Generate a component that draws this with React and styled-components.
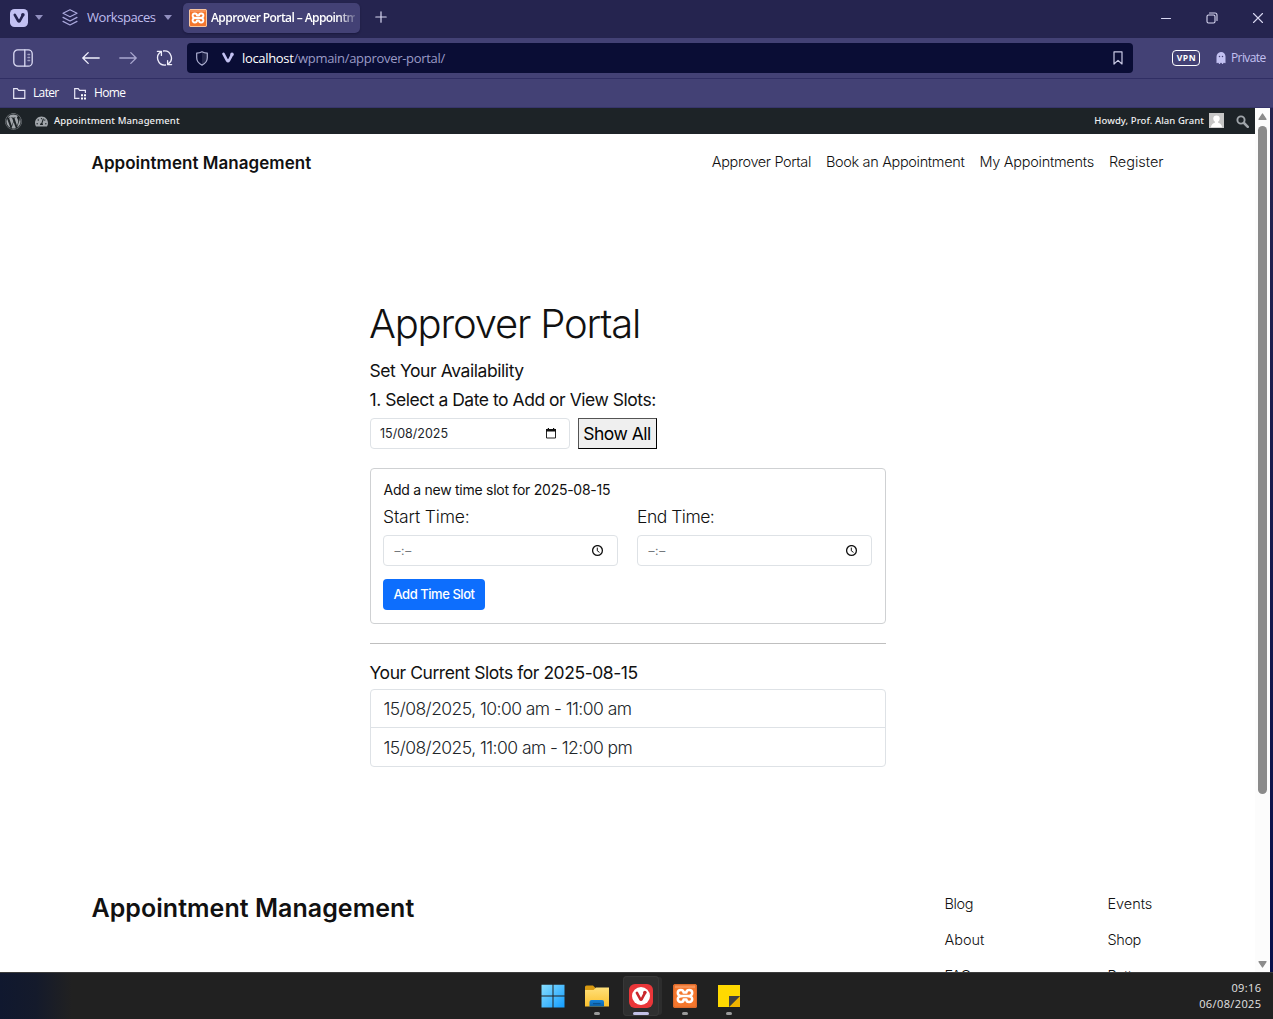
import React from "react";
import styled, { createGlobalStyle, css } from "styled-components";
import { FaWordpress, FaGhost, FaTachometerAlt } from "react-icons/fa";

const GlobalStyle = createGlobalStyle`
  *, *::before, *::after { box-sizing: border-box; }
  body { margin: 0; overflow: hidden; }
  svg { display: block; flex: none; }
`;

const ui = css`font-family: "Open Sans", "Noto Sans", sans-serif;`;
const site = css`font-family: Inter, "Noto Sans", sans-serif;`;

const Screen = styled.div`
  display: flex;
  flex-direction: column;
  width: 1273px;
  height: 1019px;
  overflow: hidden;
  background: #fff;
`;

/* ---------- browser chrome ---------- */
const Label = styled.span`
  ${ui}
  white-space: pre;
  line-height: 18px;
  font-size: ${(p) => p.$size || 12}px;
  font-weight: ${(p) => p.$weight || 400};
  letter-spacing: ${(p) => p.$track || 0}px;
  color: ${(p) => p.$color || "#fff"};
`;

const TabBar = styled.header`
  display: flex;
  align-items: center;
  flex: none;
  height: 38px;
  padding: 0 9px 3px 10px;
  background: #25244f;
`;

const VivaldiMenu = styled.div`
  display: flex;
  align-items: center;
  gap: 7px;
  width: 52px;
`;

const Workspaces = styled.div`
  display: flex;
  align-items: center;
  width: 121px;
`;

const WorkspacesLabel = styled(Label)`
  width: 70px;
  margin: -2px 7px 0 9px;
`;

const Tab = styled.div`
  display: flex;
  align-items: center;
  gap: 4px;
  width: 177px;
  height: 30px;
  padding: 0 5px 0 6px;
  border-radius: 5px;
  background: #434175;
  box-shadow: 0 1px 2px rgba(10, 10, 40, 0.4);
`;

const TabTitle = styled(Label)`
  flex: 1;
  overflow: hidden;
  mask-image: linear-gradient(90deg, #000 88%, transparent 103%);
`;

const NewTab = styled.div`
  margin: -1px 0 0 15px;
`;

const WindowControls = styled.div`
  display: flex;
  align-items: center;
  gap: 34px;
  margin-left: auto;
  margin-top: 1px;
`;

const AddressBar = styled.nav`
  display: flex;
  align-items: center;
  flex: none;
  height: 41px;
  padding: 0 7px 0 13px;
  background: #434175;
  border-bottom: 1px solid #302e64;
`;

const NavButtons = styled.div`
  display: flex;
  align-items: center;
  gap: 19px;
  margin-left: 49px;
  margin-right: 14px;
`;

const UrlField = styled.div`
  display: flex;
  align-items: center;
  flex: none;
  width: 946px;
  height: 30px;
  padding: 0 10px 0 9px;
  border-radius: 4px;
  background: #0a0d35;
`;

const Url = styled.div`
  display: flex;
  flex: 1;
  margin-left: 8px;
`;

const SiteMark = styled.div`
  margin-left: 14px;
`;

const VpnBadge = styled.span`
  display: flex;
  flex: none;
  align-items: center;
  justify-content: center;
  width: 28px;
  height: 16px;
  margin-left: 39px;
  border: 1.5px solid #fff;
  border-radius: 4px;
  color: #fff;
  font: 700 8.5px/1 "Open Sans", sans-serif;
  letter-spacing: 0.6px;
  padding-left: 1px;
`;

const PrivateBadge = styled.div`
  display: flex;
  align-items: center;
  gap: 4px;
  margin-left: 15px;
  color: #c3c1f2;
`;

const BookmarkBar = styled.nav`
  display: flex;
  align-items: center;
  flex: none;
  height: 29px;
  padding-left: 12px;
  background: #434175;
  border-bottom: 1px solid #37356b;
`;

const Bookmark = styled.a`
  display: flex;
  align-items: center;
  gap: 7px;
  width: 61px;
`;

/* ---------- page area ---------- */
const Viewport = styled.div`
  display: flex;
  flex: 1;
  min-height: 0;
  background: linear-gradient(#25244f, #08104a);
`;

const Page = styled.main`
  width: 1255px;
  height: 100%;
  overflow: hidden;
  background: #fff;
`;

const Scrollbar = styled.aside`
  display: flex;
  flex-direction: column;
  align-items: center;
  width: 15px;
  padding: 5px 0 4px;
  background: #fcfcfc;
`;

const ScrollTrack = styled.div`
  flex: 1;
  padding-top: 6px;
`;

const ScrollThumb = styled.div`
  width: 9px;
  height: 668px;
  border-radius: 5px;
  background: #8b8b8b;
`;

const AdminBar = styled.div`
  display: flex;
  align-items: center;
  height: 26px;
  padding: 0 6px 0 5px;
  background: #1d2327;
  color: #a0a5aa;
`;

const AdminText = styled.span`
  font: 500 9.5px/20px "Noto Sans", sans-serif;
  letter-spacing: ${(p) => p.$track}px;
  color: #f0f0f1;
  white-space: nowrap;
`;

const AdminSite = styled.div`
  display: flex;
  align-items: center;
  gap: 6px;
  margin-left: 13px;
`;

const AdminUser = styled.div`
  display: flex;
  align-items: center;
  gap: 5px;
  margin: 0 12px 0 auto;
  padding-bottom: 1px;
`;

const SiteHeader = styled.header`
  display: flex;
  align-items: center;
  justify-content: space-between;
  height: 57px;
  padding: 0 91.5px;
`;

const SiteTitle = styled.div`
  ${site}
  font-weight: 600;
  font-size: ${(p) => (p.$large ? 25 : 17)}px;
  line-height: 32px;
  letter-spacing: 0.04px;
  color: #111;
`;

const SiteNav = styled.nav`
  display: flex;
  gap: 15px;
  margin-top: -2px;
`;

const SiteLink = styled.a`
  ${site}
  font-weight: 300;
  font-size: 14.5px;
  line-height: 20px;
  letter-spacing: ${(p) => p.$track || 0}px;
  color: #111;
  white-space: nowrap;
`;

const Content = styled.section`
  width: 516px;
  margin: 103px 0 0 370px;
`;

const PageTitle = styled.h1`
  ${site}
  margin: 0 0 2px -1px;
  font-weight: 300;
  font-size: 40px;
  line-height: 60px;
  letter-spacing: -1.2px;
  white-space: nowrap;
  color: #111;
`;

const Heading = styled.h2`
  ${site}
  margin: 0 0 0 -0.5px;
  font-weight: 400;
  font-size: 17.5px;
  line-height: 29px;
  letter-spacing: ${(p) => p.$track}px;
  white-space: nowrap;
  color: #111;
`;

const DateRow = styled.div`
  display: flex;
  gap: 8px;
  margin-top: 4px;
`;

const Field = styled.div`
  ${site}
  display: flex;
  align-items: center;
  justify-content: space-between;
  width: ${(p) => p.$width}px;
  height: 31px;
  padding: 0 ${(p) => p.$right}px 0 9px;
  border: 1px solid #dee2e6;
  border-radius: 4px;
  font-size: 12.5px;
  color: #212529;
`;

const ShowAll = styled.button`
  ${site}
  width: 79px;
  height: 31px;
  padding: 0 1px 0 0;
  border: 1px outset #000;
  background: #efefef;
  font-size: 17.5px;
  line-height: 27px;
  letter-spacing: -0.5px;
  color: #000;
  white-space: nowrap;
`;

const Card = styled.div`
  height: 156px;
  margin-top: 19px;
  padding: 10px 13px 0;
  border: 1px solid #cfd1d3;
  border-radius: 4px;
`;

const CardTitle = styled.h3`
  ${site}
  margin: 0 0 0 -0.5px;
  font-weight: 400;
  font-size: 14px;
  line-height: 22px;
  letter-spacing: -0.26px;
  color: #111;
`;

const TimeGrid = styled.div`
  display: grid;
  grid-template-columns: 235px 235px;
  gap: 19px;
  margin: 0 0 13px -1px;
`;

const FieldLabel = styled.label`
  ${site}
  display: block;
  font-weight: 300;
  font-size: 17.5px;
  line-height: 31px;
  height: 34px;
  letter-spacing: ${(p) => p.$track}px;
  color: #111;
`;

const EmptyTime = styled.span`
  padding-left: 1.5px;
  font-size: 12px;
  line-height: 14px;
  letter-spacing: 0.6px;
  color: #74787c;
`;

const AddButton = styled.button`
  ${site}
  display: block;
  width: 102px;
  height: 31px;
  margin-left: -1px;
  padding: 0 0 1px;
  border: 0;
  border-radius: 4px;
  background: #0d6efd;
  color: #fff;
  font-weight: 500;
  font-size: 13px;
  letter-spacing: -0.45px;
  white-space: nowrap;
`;

const Divider = styled.div`
  height: 1px;
  margin: 19px 0 14px;
  background: #bfbfbf;
`;

const SlotList = styled.ul`
  margin: 2px 0 0;
  padding: 0;
  list-style: none;
  border: 1px solid #dee2e6;
  border-radius: 4px;
`;

const Slot = styled.li`
  ${site}
  height: 37px;
  padding-left: 12.5px;
  font-weight: 300;
  font-size: 17.5px;
  line-height: 38px;
  letter-spacing: -0.55px;
  color: #212529;
  & + & {
    height: 39px;
    line-height: 39px;
    border-top: 1px solid #dee2e6;
  }
`;

const SiteFooter = styled.footer`
  display: grid;
  grid-template-columns: 853px 163px 100px;
  padding: 125px 0 0 91.5px;
`;

const FooterColumn = styled.div`
  display: flex;
  flex-direction: column;
  gap: 16px;
  padding-top: 2px;
`;

/* ---------- taskbar ---------- */
const Taskbar = styled.footer`
  display: flex;
  justify-content: space-between;
  flex: none;
  height: 47px;
  padding: 0 12px 0 530.5px;
  border-top: 1px solid #3c3c3c;
  background: linear-gradient(90deg, #10182f 0, #141a2b 36px, #212121 72px, #212121 100%);
`;

const TaskItems = styled.div`
  display: flex;
  padding-top: 3px;
`;

const TaskItem = styled.div`
  display: flex;
  flex-direction: column;
  align-items: center;
  justify-content: space-between;
  width: 36px;
  height: 40px;
  margin: 0 4px;
  padding: 8px 0 1px;
  border-radius: 4px;
  background: ${(p) => (p.$active ? "#2f2f2f" : "transparent")};
  box-shadow: ${(p) => (p.$active ? "inset 0 0 0 1px #383838, 4px 0 0 -1px #2d2d2d" : "none")};
`;

const Indicator = styled.div`
  width: ${(p) => (p.$active ? 16 : 6)}px;
  height: 3px;
  border-radius: 2px;
  background: ${(p) => (p.$active ? "#c3c1e6" : "#9a9a9a")};
`;

const Clock = styled.div`
  display: flex;
  flex-direction: column;
  align-items: flex-end;
  padding-top: 7px;
`;

const ClockLine = styled.span`
  ${ui}
  font-size: 11px;
  line-height: 16px;
  letter-spacing: 0.38px;
  margin-right: -0.4px;
  color: #e4e4e4;
`;

/* ---------- drawings ---------- */
const Stroke = ({ w, h, color = "#d9d8f2", width = 1.3, children }) => (
  <svg width={w} height={h} viewBox={`0 0 ${w} ${h}`} fill="none" stroke={color} strokeWidth={width} strokeLinecap="round" strokeLinejoin="round">
    {children}
  </svg>
);

const Caret = () => (
  <svg width="8" height="5" viewBox="0 0 8 5"><path d="M0 0h8L4 5z" fill="#918fbf" /></svg>
);

const VivaldiMark = ({ size = 12, color }) => (
  <svg width={size} height={size} viewBox="0 0 12 12" fill="none">
    <path d="M1.5 1.8 5.1 8.6Q6 10 6.9 8.6L9.4 3.8" stroke={color} strokeWidth="2.6" strokeLinecap="round" />
    <circle cx="10" cy="2.4" r="1.8" fill={color} />
  </svg>
);

const VivaldiBadge = () => (
  <svg width="18" height="18" viewBox="0 0 18 18" fill="none">
    <rect width="18" height="18" rx="4.5" fill="#c3c1f2" />
    <path d="M4.8 5.8 8.3 12Q9 13.1 9.7 12L12.6 6.6" stroke="#25244f" strokeWidth="2.6" strokeLinecap="round" strokeLinejoin="round" />
    <circle cx="12.9" cy="5.8" r="1.8" fill="#25244f" />
  </svg>
);

const Layers = () => (
  <Stroke w={16} h={17} color="#aaa8dc" width={1.2}>
    <path d="M8 .8 15 4.3 8 7.8 1 4.3z" />
    <path d="M1 8.4 8 12 15 8.4M1 12.4 8 16 15 12.4" />
  </Stroke>
);

const Xampp = ({ size }) => (
  <svg width={size} height={size} viewBox="0 0 24 24" fill="none">
    <rect width="24" height="24" rx="2.5" fill="#f5772d" />
    <rect x=".6" y=".6" width="22.8" height="22.8" rx="2" stroke={size < 20 ? "#f5d5b8" : "#dd6a2b"} strokeWidth="1.2" />
    <path d="M2 1.5h20v2.5H2z" fill="#fff" opacity=".2" />
    <path
      d="M10 12C6.5 12 4.8 11 4.8 8.9S6 6 7.8 6 10.6 7.3 10.6 8.6H13.4C13.4 7.3 14.4 6 16.2 6S19.2 6.8 19.2 8.9 17.5 12 14 12C17.5 12 19.2 13 19.2 15.1S18 18 16.2 18 13.4 16.7 13.4 15.4H10.6C10.6 16.7 9.6 18 7.8 18S4.8 17.2 4.8 15.1 6.5 12 10 12ZM9 12H15"
      stroke="#fff" strokeWidth="2.5" strokeLinejoin="round"
    />
  </svg>
);

const PanelIcon = () => (
  <Stroke w={20} h={18} color="#dcdbf4" width={1.3}>
    <rect x=".8" y=".8" width="18.4" height="16.4" rx="4" />
    <path d="M11.8 1v16" />
    <path d="M15 5.5h1.6M15 8.5h1.6M15 11.5h1.6" strokeWidth="1.4" opacity=".6" />
  </Stroke>
);

const Arrow = ({ dim, flip }) => (
  <Stroke w={18} h={14} color={dim ? "#a9a7cf" : "#f0effc"}>
    <path d={flip ? "M.8 7H17M11.8 1.6 17.2 7l-5.4 5.4" : "M17.2 7H1M6.2 1.6.8 7l5.4 5.4"} />
  </Stroke>
);

const Reload = () => (
  <Stroke w={17} h={16} color="#f0effc" width={1.3}>
    <path d="M9.5 15A7.1 7.1 0 0 1 5 1.9" />
    <path d="M7.5 1A7.1 7.1 0 0 1 12 14.1" />
    <path d="M1.4 1.4H5.4V5.4M15.6 14.6H11.6V10.6" />
  </Stroke>
);

const Shield = () => (
  <Stroke w={12} h={15} color="#aeb0d2" width={1.2}>
    <path d="M6 1.2v12.6C9 12.6 11.3 9.6 11.3 6.5V2.3Z" fill="#25284d" stroke="none" />
    <path d="M6 .8Q8.4 2 11.3 2.1V6.8C11.3 10 8.7 12.8 6 14.1 3.3 12.8.7 10 .7 6.8V2.1Q3.6 2 6 .8Z" />
  </Stroke>
);

const Folder = ({ dots }) => (
  <svg width="14" height="13" viewBox="0 0 14 13" fill="none">
    <path
      d={dots ? "M6.5 11.3H1.7V1.7H5.2L6.6 3.3H12.4V6" : "M1.7 1.7H5.2L6.6 3.3H12.8V11.3H1.7Z"}
      stroke="#e9e8f8" strokeWidth="1.2"
    />
    {dots && <path d="M8 7.3h2v2H8zM11 7.3h2v2h-2zM8 10.5h2v2H8zM11 10.5h2v2h-2z" fill="#fff" />}
  </svg>
);

const Avatar = () => (
  <svg width="15" height="15" viewBox="0 0 15 15">
    <path d="M0 0h15v15H0z" fill="#c6c6c6" />
    <circle cx="7.5" cy="5.6" r="3.2" fill="#fff" />
    <path d="M2 14.3C2.3 11 4.5 9.8 7.5 9.8S12.7 11 13 14.3Z" fill="#fff" />
    <path d="M5.8 7.5h3.4V11H5.8z" fill="#fff" />
  </svg>
);

const SearchIcon = () => (
  <svg width="13" height="13" viewBox="0 0 13 13" fill="none" stroke="#a0a5aa">
    <circle cx="5" cy="5" r="3.6" strokeWidth="1.9" />
    <path d="M8 8 11.8 11.8" strokeWidth="2.5" strokeLinecap="round" />
  </svg>
);

const CalendarIcon = () => (
  <svg width="10" height="11" viewBox="0 0 10 11">
    <path d="M.5 2.2h9V10h-9z" fill="none" stroke="#222" />
    <path d="M0 1h10v2.6H0zM1.8 0h1.2v2H1.8zM7 0h1.2v2H7z" fill="#111" />
  </svg>
);

const ClockIcon = () => (
  <svg width="12" height="12" viewBox="0 0 12 12" fill="none" stroke="#111">
    <circle cx="5.5" cy="5.5" r="4.9" strokeWidth="1.3" />
    <path d="M5.3 2.6V5.8L7.5 7.4" strokeWidth="1" />
  </svg>
);

const ScrollArrow = ({ down }) => (
  <svg width="9" height="7" viewBox="0 0 9 7">
    <path d={down ? "M1 .7H8L4.5 6Z" : "M1 6.3H8L4.5 1Z"} fill="#8b8b8b" stroke="#8b8b8b" strokeWidth="1.3" strokeLinejoin="round" />
  </svg>
);

const WindowsLogo = () => (
  <svg width="24" height="24" viewBox="0 0 24 24">
    <defs>
      <linearGradient id="win" x1="0" y1="0" x2="24" y2="24" gradientUnits="userSpaceOnUse">
        <stop stopColor="#8be0ff" /><stop offset="1" stopColor="#0f9bff" />
      </linearGradient>
    </defs>
    <path d="M.5 .8H11.5V11.6H.5zM12.5 .8H23.5V11.6H12.5zM.5 12.6H11.5V23.6H.5zM12.5 12.6H23.5V23.6H12.5z" fill="url(#win)" />
  </svg>
);

const Explorer = () => (
  <svg width="24" height="24" viewBox="0 0 24 24">
    <defs>
      <linearGradient id="fold" x1="0" y1="0" x2="0" y2="1"><stop stopColor="#ffe07a" /><stop offset="1" stopColor="#fbc02d" /></linearGradient>
      <linearGradient id="tray" x1="0" y1="0" x2="0" y2="1"><stop stopColor="#1583dc" /><stop offset="1" stopColor="#0b62a9" /></linearGradient>
    </defs>
    <path d="M0 3Q0 1.5 1.5 1.5H8L10.5 4V8H0z" fill="#d99a11" />
    <path d="M0 6H8.5L11 3.5H24V22.5H0z" fill="url(#fold)" />
    <path d="M4.5 22.5V18Q4.5 16 6.5 16H17Q19 16 19 18V22.5z" fill="url(#tray)" />
    <path d="M8 19h7.5v1.3H8z" fill="#0a5390" />
  </svg>
);

const VivaldiApp = () => (
  <svg width="24" height="24" viewBox="0 0 24 24" fill="none">
    <rect width="24" height="24" rx="6" fill="#ea3639" />
    <circle cx="12" cy="12" r="9" fill="#fff" />
    <path d="M7.9 8.8 11.2 15Q12 16.3 12.8 15L15.7 9.4" stroke="#c9282d" strokeWidth="2.6" strokeLinecap="round" strokeLinejoin="round" />
    <circle cx="15.9" cy="8.6" r="1.8" fill="#c9282d" />
  </svg>
);

const StickyNotes = () => (
  <svg width="22" height="24" viewBox="0 0 22 24">
    <path d="M0 1H22V12L11 23H0z" fill="#ffd900" />
    <path d="M11 23H22V12z" fill="#f0b400" />
    <path d="M11 12H22L11 23z" fill="#404040" />
  </svg>
);

const taskItems = [
  { icon: <WindowsLogo /> },
  { icon: <Explorer />, open: true },
  { icon: <VivaldiApp />, open: true, active: true },
  { icon: <Xampp size={24} />, open: true },
  { icon: <StickyNotes />, open: true },
];

const navLinks = [
  ["Approver Portal", -0.38],
  ["Book an Appointment", -0.34],
  ["My Appointments", -0.27],
  ["Register", -0.03],
];

const TimeField = ({ label, track }) => (
  <div>
    <FieldLabel $track={track}>{label}</FieldLabel>
    <Field $width={235} $right={13}>
      <EmptyTime>–:–</EmptyTime>
      <ClockIcon />
    </Field>
  </div>
);

export default function App() {
  return (
    <Screen>
      <GlobalStyle />
      <TabBar>
        <VivaldiMenu><VivaldiBadge /><Caret /></VivaldiMenu>
        <Workspaces>
          <Layers />
          <WorkspacesLabel $size={13} $track={-0.45} $color="#bfbdee">Workspaces</WorkspacesLabel>
          <Caret />
        </Workspaces>
        <Tab>
          <Xampp size={18} />
          <TabTitle $size={12} $weight={600} $track={-0.58}>Approver Portal – Appointment</TabTitle>
        </Tab>
        <NewTab>
          <Stroke w={12} h={12} width={1.2}><path d="M6 .8v10.4M.8 6h10.4" /></Stroke>
        </NewTab>
        <WindowControls>
          <Stroke w={12} h={12} width={1.1}><path d="M1.5 6.5h9" /></Stroke>
          <Stroke w={12} h={12} width={1.1}>
            <rect x="1" y="3" width="8" height="8" rx="1.5" />
            <path d="M3.5 1H9Q11 1 11 3V8.5" />
          </Stroke>
          <Stroke w={12} h={12} width={1.1}><path d="M1.5 1.5l9 9M10.5 1.5l-9 9" /></Stroke>
        </WindowControls>
      </TabBar>

      <AddressBar>
        <PanelIcon />
        <NavButtons><Arrow /><Arrow flip dim /><Reload /></NavButtons>
        <UrlField>
          <Shield />
          <SiteMark><VivaldiMark color="#c3c1f2" /></SiteMark>
          <Url>
            <Label $size={13} $track={-0.33}>localhost</Label>
            <Label $size={13} $track={-0.3} $color="#9a9bc6">/wpmain/approver-portal/</Label>
          </Url>
          <Stroke w={10} h={14} color="#c9c9e4" width={1.2}><path d="M1 .8H9V13L5 9.4 1 13Z" /></Stroke>
        </UrlField>
        <VpnBadge>VPN</VpnBadge>
        <PrivateBadge>
          <FaGhost size={12} />
          <Label $size={12} $track={-0.6} $color="#c3c1f2">Private</Label>
        </PrivateBadge>
      </AddressBar>

      <BookmarkBar>
        <Bookmark><Folder /><Label $track={-0.65}>Later</Label></Bookmark>
        <Bookmark><Folder dots /><Label $track={-0.65}>Home</Label></Bookmark>
      </BookmarkBar>

      <Viewport>
        <Page>
          <AdminBar>
            <FaWordpress size={17} />
            <AdminSite>
              <FaTachometerAlt size={13} />
              <AdminText $track={0.1}>Appointment Management</AdminText>
            </AdminSite>
            <AdminUser>
              <AdminText $track={0.07}>Howdy, Prof. Alan Grant</AdminText>
              <Avatar />
            </AdminUser>
            <SearchIcon />
          </AdminBar>

          <SiteHeader>
            <SiteTitle>Appointment Management</SiteTitle>
            <SiteNav>
              {navLinks.map(([text, track]) => (
                <SiteLink key={text} $track={track}>{text}</SiteLink>
              ))}
            </SiteNav>
          </SiteHeader>

          <Content>
            <PageTitle>Approver Portal</PageTitle>
            <Heading $track={-0.42}>Set Your Availability</Heading>
            <Heading $track={-0.47}>1. Select a Date to Add or View Slots:</Heading>
            <DateRow>
              <Field $width={200} $right={13}>15/08/2025<CalendarIcon /></Field>
              <ShowAll>Show All</ShowAll>
            </DateRow>

            <Card>
              <CardTitle>Add a new time slot for 2025-08-15</CardTitle>
              <TimeGrid>
                <TimeField label="Start Time:" track={-0.15} />
                <TimeField label="End Time:" track={-0.5} />
              </TimeGrid>
              <AddButton>Add Time Slot</AddButton>
            </Card>

            <Divider />
            <Heading $track={-0.44}>Your Current Slots for 2025-08-15</Heading>
            <SlotList>
              <Slot>15/08/2025, 10:00 am - 11:00 am</Slot>
              <Slot>15/08/2025, 11:00 am - 12:00 pm</Slot>
            </SlotList>
          </Content>

          <SiteFooter>
            <SiteTitle $large>Appointment Management</SiteTitle>
            <FooterColumn>
              <SiteLink $track={-0.4}>Blog</SiteLink>
              <SiteLink $track={-0.05}>About</SiteLink>
              <SiteLink $track={-0.3}>FAQs</SiteLink>
            </FooterColumn>
            <FooterColumn>
              <SiteLink $track={-0.05}>Events</SiteLink>
              <SiteLink $track={-0.4}>Shop</SiteLink>
              <SiteLink $track={-0.3}>Patterns</SiteLink>
            </FooterColumn>
          </SiteFooter>
        </Page>
        <Scrollbar>
          <ScrollArrow />
          <ScrollTrack><ScrollThumb /></ScrollTrack>
          <ScrollArrow down />
        </Scrollbar>
      </Viewport>

      <Taskbar>
        <TaskItems>
          {taskItems.map((t, i) => (
            <TaskItem key={i} $active={t.active}>
              {t.icon}
              {t.open && <Indicator $active={t.active} />}
            </TaskItem>
          ))}
        </TaskItems>
        <Clock>
          <ClockLine>09:16</ClockLine>
          <ClockLine>06/08/2025</ClockLine>
        </Clock>
      </Taskbar>
    </Screen>
  );
}
